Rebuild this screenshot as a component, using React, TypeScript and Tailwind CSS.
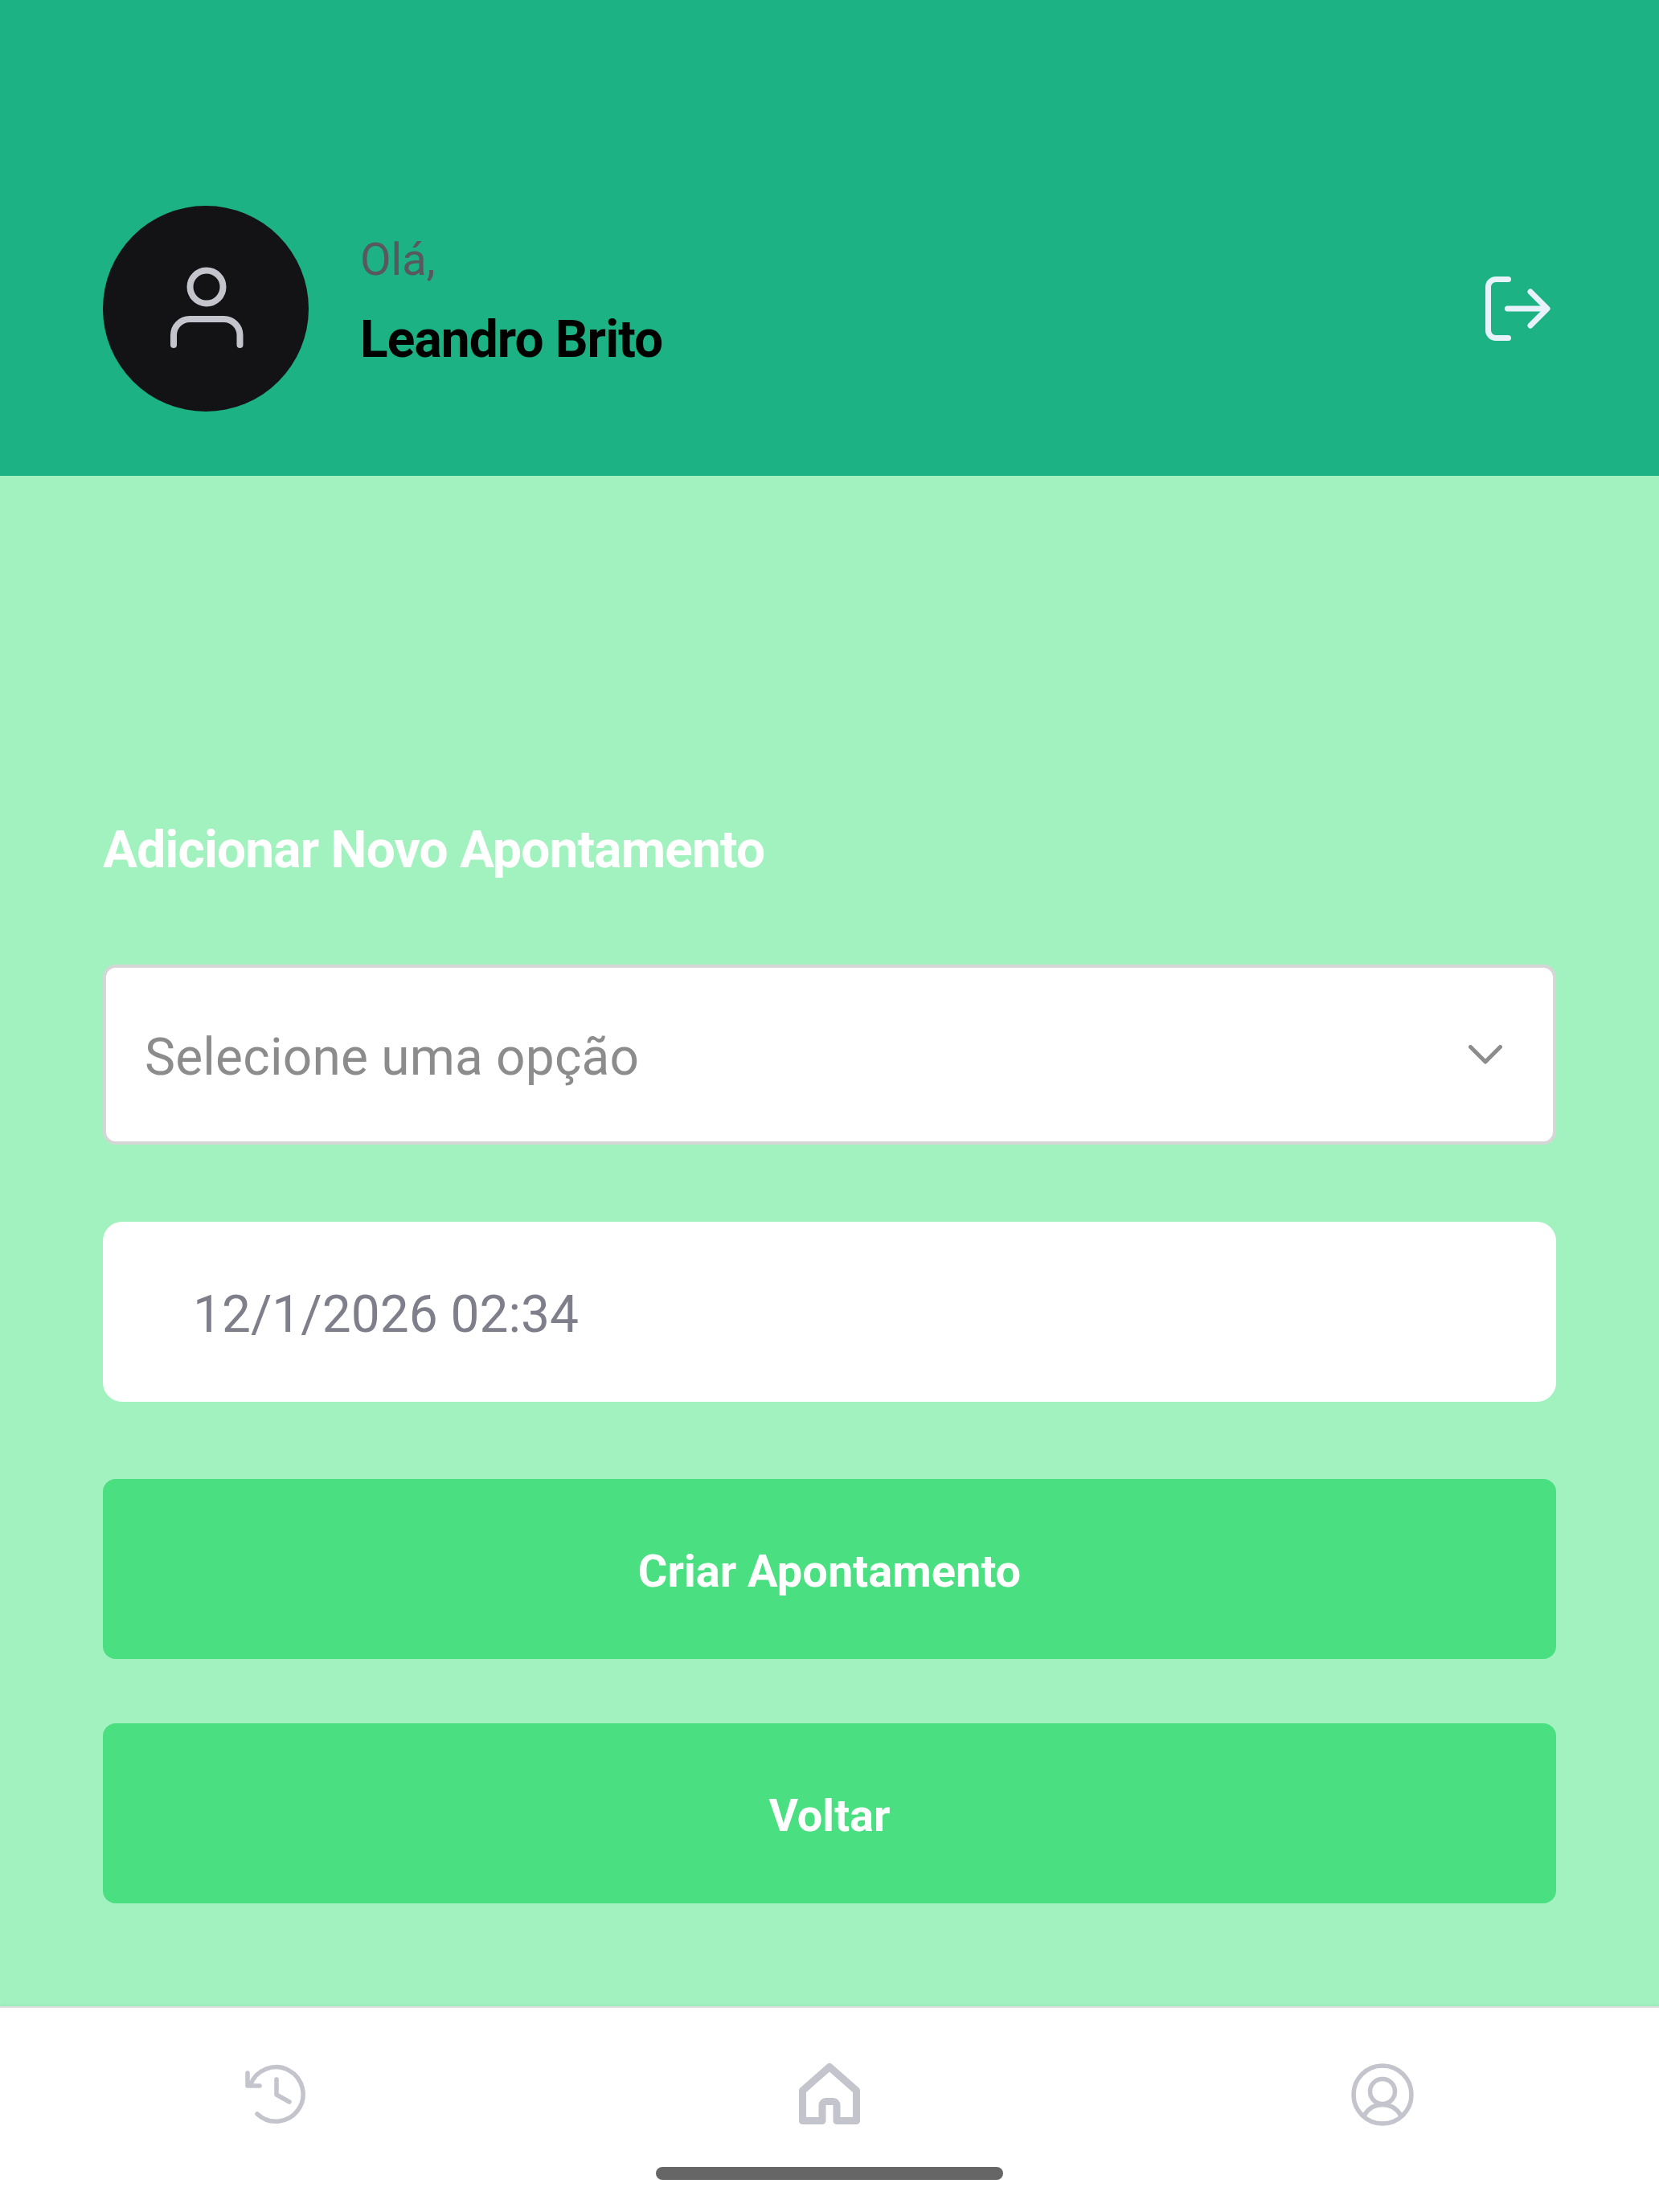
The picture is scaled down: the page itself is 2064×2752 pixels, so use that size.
/**
 * Novo Apontamento screen
 * Header with greeting, form and bottom tab bar.
 */

import React from 'react'

function ActionButton({ label }: { label: string }) {
    return (
        <button className="flex h-[224px] w-full items-center justify-center rounded-[16px] bg-[#4adf81] pt-[6px] text-[56px] leading-[66px] font-bold text-white">
            {label}
        </button>
    )
}

function AvatarIcon() {
    return (
        <svg viewBox="0 0 256 256" className="h-[256px] w-[256px]" fill="none" stroke="#c4c4cc" strokeWidth="8" strokeLinecap="round">
            <circle cx="129" cy="101" r="20.5" />
            <path d="M88 173V161a20 20 0 0 1 20-20H150.500a20 20 0 0 1 20 20V173" />
        </svg>
    )
}

function LogoutIcon() {
    return (
        <svg viewBox="0 0 96 96" className="h-[96px] w-[96px]" fill="none" stroke="#e8f2fb" strokeWidth="7" strokeLinecap="round" strokeLinejoin="round">
            <path d="M36.500 11.500H21a9.500 9.500 0 0 0-9.500 9.500V75a9.500 9.500 0 0 0 9.500 9.500H36.500" />
            <path d="M35.500 48H84" />
            <path d="M64 27l21 21-21 21" />
        </svg>
    )
}

function ChevronIcon() {
    return (
        <svg viewBox="0 0 42 24" className="h-[24px] w-[42px]" fill="none" stroke="#8c8c8c" strokeWidth="5" strokeLinecap="round" strokeLinejoin="round">
            <path d="M2.500 2.500L21 21 39.500 2.500" />
        </svg>
    )
}

function HistoryIcon() {
    return (
        <svg viewBox="0 0 80 80" className="h-[80px] w-[80px]" fill="none" stroke="#c4c4cc" strokeWidth="5.500" strokeLinecap="round" strokeLinejoin="round">
            <path d="M4 13V29H19" />
            <path d="M7.500 28A33.800 33.800 0 1 1 16 64" />
            <path d="M40 21V40L56 49" />
        </svg>
    )
}

function HomeIcon() {
    return (
        <svg viewBox="0 0 80 80" className="h-[80px] w-[80px]" fill="none" stroke="#c4c4cc" strokeWidth="9" strokeLinejoin="round">
            <path d="M40 5.500L6.500 35V72.500H31V53a4.500 4.500 0 0 1 4.500-4.500h9A4.500 4.500 0 0 1 49 53V72.500H73.500V35Z" />
        </svg>
    )
}

function ProfileIcon() {
    return (
        <svg viewBox="0 0 80 80" className="h-[80px] w-[80px]" fill="none" stroke="#c4c4cc" strokeWidth="5.500">
            <circle cx="40" cy="40" r="36" />
            <circle cx="40" cy="36" r="15.500" />
            <path d="M17.500 65.500C23 56 31 52.500 40 52.500S57 56 62.500 65.500" />
        </svg>
    )
}

export default function App() {
    return (
        <div className="flex h-[2752px] w-[2064px] flex-col bg-[#a2f2c0] font-['Roboto',sans-serif]">
            {/* Header */}
            <header className="h-[592px] bg-[#1cb283] px-[128px] pt-[256px]">
                <div className="flex h-[256px] items-center">
                    <div className="h-[256px] w-[256px] rounded-full bg-[#131316]">
                        <AvatarIcon />
                    </div>
                    <div className="mb-[19px] ml-[64px] flex flex-col">
                        <span className="text-[56px] leading-[66px] text-[#58585f]">Olá,</span>
                        <span className="mt-[29px] text-[64px] leading-[75px] font-bold tracking-[-0.9px] text-black">Leandro Brito</span>
                    </div>
                    <button className="ml-auto">
                        <LogoutIcon />
                    </button>
                </div>
            </header>

            {/* Form */}
            <main className="flex flex-1 flex-col px-[128px] pt-[428px]">
                <h1 className="mb-[105px] text-[64px] leading-[75px] font-bold tracking-[-0.85px] text-white">
                    Adicionar Novo Apontamento
                </h1>
                <div className="mb-[96px] flex h-[224px] items-center justify-between rounded-[16px] border-4 border-[#d6d6d6] bg-white pr-[63px] pl-[48px]">
                    <span className="pt-[6px] text-[64px] leading-[75px] tracking-[0.2px] text-[#8c8c8c]">Selecione uma opção</span>
                    <ChevronIcon />
                </div>
                <div className="mb-[96px] flex h-[224px] items-center rounded-[24px] bg-white pl-[112px]">
                    <span className="pt-[6px] text-[64px] leading-[75px] text-[#7f7f8c]">12/1/2026 02:34</span>
                </div>
                <div className="flex flex-col gap-[80px]">
                    <ActionButton label="Criar Apontamento" />
                    <ActionButton label="Voltar" />
                </div>
            </main>

            {/* Tab bar */}
            <nav className="relative grid h-[256px] grid-cols-3 border-t-2 border-[#dddddd] bg-white pt-[68px] shadow-[0_-2px_4px_rgba(0,0,0,0.04)]">
                <div className="flex justify-center"><HistoryIcon /></div>
                <div className="flex justify-center"><HomeIcon /></div>
                <div className="flex justify-center"><ProfileIcon /></div>
                <div className="absolute top-[198px] left-[816px] h-[16px] w-[432px] rounded-full bg-[#666666]" />
            </nav>
        </div>
    )
}
